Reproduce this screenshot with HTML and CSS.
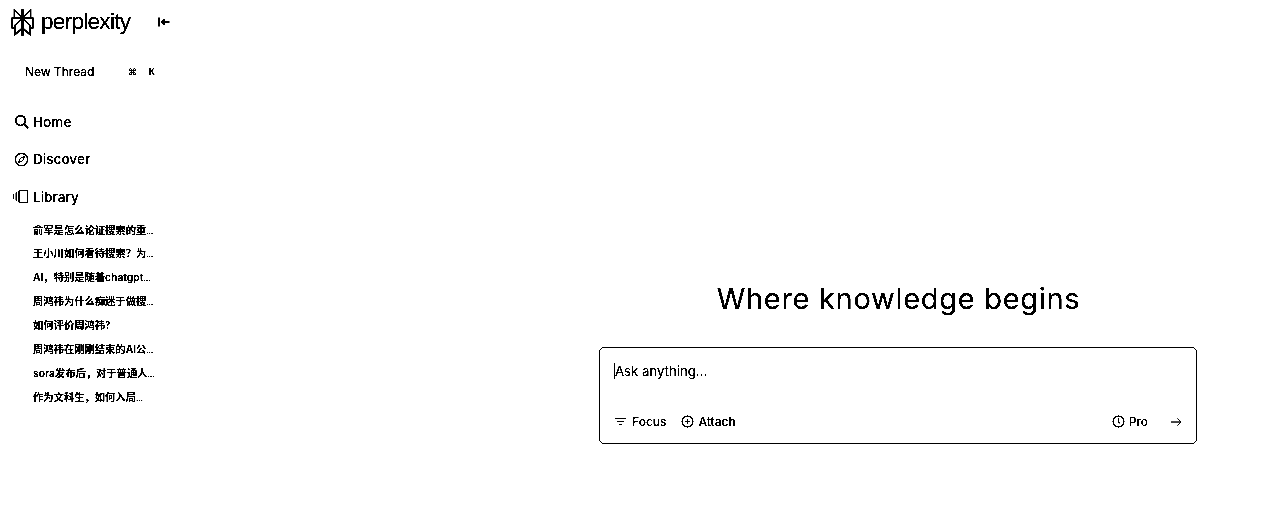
FILE: index.html
```html
<!DOCTYPE html>
<html lang="en">
<head>
    <meta charset="UTF-8">
    <meta name="viewport" content="width=device-width, initial-scale=1.0">
    <title>Perplexity</title>
    <link rel="stylesheet" href="styles.css">
</head>
<body>

    <div class="page">
        <aside class="sidebar">
            <div class="brand">
                <svg class="logo" viewBox="0 0 24 28" fill="none" stroke="#000" stroke-width="1.500">
                    <path d="M3.500 1 12 9.500 20.500 1V9.500H3.500V1Z"/>
                    <path d="M12 0V28" stroke-width="2"/>
                    <path d="M3.500 9.500H1V19.500H4M20.500 9.500H23V19.500H20"/>
                    <path d="M12 9.500 4 17V27L12 19.500 20 27V17L12 9.500Z"/>
                </svg>
                <span class="brand-name">perplexity</span>
                <svg class="collapse" viewBox="0 0 12 12" fill="none" stroke="#000" stroke-width="1.500">
                    <path d="M1 1.500V10.500M11.500 6H4M7 3 4 6 7 9"/>
                </svg>
            </div>

            <div class="new-thread">
                <span>New Thread</span>
                <span class="keys"><span>⌘</span><span>K</span></span>
            </div>

            <nav class="nav">
                <a class="nav-item">
                    <svg class="nav-icon" viewBox="0 0 16 16" fill="none" stroke="#000" stroke-width="1.700">
                        <circle cx="7" cy="7" r="5.200"/>
                        <path d="M10.800 10.800 15 15"/>
                    </svg>
                    Home
                </a>
                <a class="nav-item">
                    <svg class="nav-icon" viewBox="0 0 16 16" fill="none" stroke="#000" stroke-width="1.300">
                        <circle cx="8" cy="8" r="6.500"/>
                        <path d="M11 5 9.300 9.300 5 11 6.700 6.700Z" stroke-width="1"/>
                    </svg>
                    Discover
                </a>
                <a class="nav-item">
                    <svg class="nav-icon library-icon" viewBox="0 0 17 16" fill="none" stroke="#000" stroke-width="1.400">
                        <path d="M1 5V11M4 3.500V12.500"/>
                        <rect x="7" y="1.500" width="9" height="13" rx="1"/>
                    </svg>
                    Library
                </a>
            </nav>

            <ul class="threads">
                <li>俞军是怎么论证搜索的重<span class="more">…</span></li>
                <li>王小川如何看待搜索？为<span class="more">…</span></li>
                <li>AI，特别是随着chatgpt<span class="more">…</span></li>
                <li>周鸿祎为什么痴迷于做搜<span class="more">…</span></li>
                <li>如何评价周鸿祎？</li>
                <li>周鸿祎在刚刚结束的AI公<span class="more">…</span></li>
                <li>sora发布后，对于普通人<span class="more">…</span></li>
                <li>作为文科生，如何入局<span class="more">…</span></li>
            </ul>
        </aside>

        <main class="main">
            <h1>Where knowledge begins</h1>
            <div class="ask-box">
                <div class="ask-input"><span class="caret"></span>Ask anything...</div>
                <div class="ask-actions">
                    <div class="action-group">
                        <span class="action">
                            <svg class="action-icon" viewBox="0 0 14 14" fill="none" stroke="#000" stroke-width="1.200">
                                <path d="M1 3.500H13M3.500 7H10.500M5.500 10.500H8.500"/>
                            </svg>
                            Focus
                        </span>
                        <span class="action">
                            <svg class="action-icon" viewBox="0 0 14 14" fill="none" stroke="#000" stroke-width="1.200">
                                <circle cx="7" cy="7" r="5.800"/>
                                <path d="M7 4.500V9.500M4.500 7H9.500"/>
                            </svg>
                            Attach
                        </span>
                    </div>
                    <div class="action-group">
                        <span class="action pro">
                            <svg class="action-icon" viewBox="0 0 14 14" fill="none" stroke="#000" stroke-width="1.200">
                                <circle cx="7" cy="7" r="5.800"/>
                                <path d="M7 3.500V7.500L9 9"/>
                            </svg>
                            Pro
                        </span>
                        <svg class="send" viewBox="0 0 12 12" fill="none" stroke="#000" stroke-width=".8">
                            <path d="M1 6H11M7.500 2.500 11 6 7.500 9.500"/>
                        </svg>
                    </div>
                </div>
            </div>
        </main>
    </div>

</body>
</html>
```

FILE: styles.css
```css
* {
    box-sizing: border-box;
}

html {
    background: #fff;
}

body {
    margin: 0;
    font-family: Inter, 'Noto Sans CJK SC', sans-serif;
    color: #000;
    background: #fff;
    filter: grayscale(1) brightness(.8) contrast(12); /* the page is flat black on white */
}

.page {
    display: flex;
    height: 531px;
    overflow: hidden;
}

.sidebar {
    width: 170px;
    flex-shrink: 0;
    padding-top: 9px;
}

.brand {
    display: flex;
    align-items: center;
    height: 27px;
    padding-left: 11px;
}

.logo {
    width: 23px;
    height: 27px;
    flex-shrink: 0;
}

.brand-name {
    width: 90px;
    margin: -2px 0 0 7px;
    font-family: 'Liberation Sans', sans-serif;
    font-size: 22.500px;
    letter-spacing: -.7px;
}

.collapse {
    width: 12px;
    height: 12px;
    margin: -1px 0 0 27px;
    flex-shrink: 0;
}

.new-thread {
    display: flex;
    align-items: center;
    justify-content: space-between;
    width: 155px;
    margin-top: 28px;
    padding-left: 25px;
    font-size: 12px;
    font-weight: 500;
    letter-spacing: -.05px;
}

.keys {
    display: flex;
    gap: 12px;
    font-size: 9px;
}

.nav {
    display: flex;
    flex-direction: column;
    margin-top: 24px;
}

.nav-item {
    display: flex;
    align-items: center;
    gap: 4px;
    height: 37.500px;
    padding-left: 14px;
    font-size: 13.600px;
    font-weight: 500;
}

.nav-icon {
    width: 15px;
    height: 15px;
}

.library-icon {
    width: 17px;
    margin-left: -2px;
}

.threads {
    list-style: none;
    margin: 2px 0 0;
    padding: 0 0 0 33px;
}

.threads li {
    height: 23.900px;
    line-height: 24px;
    font-size: 10.300px;
    font-weight: 600;
    white-space: nowrap;
}

.more {
    font-size: 7px;
    font-weight: 700;
}

.main {
    flex: 1;
    display: flex;
    flex-direction: column;
    align-items: flex-end;
    padding: 280px 83px 0 0;
}

h1 {
    width: 597px;
    margin: 0;
    font-size: 29px;
    line-height: 38px;
    font-weight: 400;
    letter-spacing: .7px;
    text-align: center;
}

.ask-box {
    width: 598px;
    height: 97px;
    margin-top: 29px;
    padding: 14px 14px 0;
    border: 1px solid #000;
    border-radius: 5px;
}

.ask-input {
    display: flex;
    align-items: center;
    height: 18px;
    font-size: 13.200px;
}

.caret {
    width: 1px;
    height: 16px;
    background: #000;
}

.ask-actions {
    display: flex;
    justify-content: space-between;
    align-items: center;
    margin-top: 34px;
}

.action-group {
    display: flex;
    align-items: center;
    gap: 14px;
}

.action {
    display: flex;
    align-items: center;
    gap: 5px;
    font-size: 12px;
    font-weight: 500;
}

.action-icon {
    width: 13px;
    height: 13px;
}

.pro {
    gap: 4px;
    font-weight: 400;
}

.send {
    width: 12px;
    height: 12px;
    margin-left: 8px;
}
```
